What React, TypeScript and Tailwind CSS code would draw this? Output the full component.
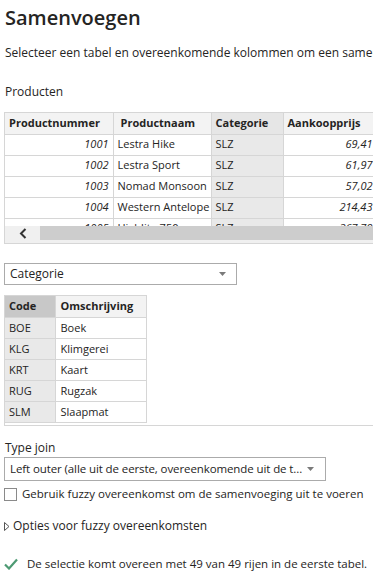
import React from 'react';

const font = { fontFamily: '"Open Sans", "Noto Sans", sans-serif' };

const products = [
    { nr: '1001', naam: 'Lestra Hike', cat: 'SLZ', prijs: '69,41' },
    { nr: '1002', naam: 'Lestra Sport', cat: 'SLZ', prijs: '61,97' },
    { nr: '1003', naam: 'Nomad Monsoon', cat: 'SLZ', prijs: '57,02' },
    { nr: '1004', naam: 'Western Antelope', cat: 'SLZ', prijs: '214,43' },
    { nr: '1005', naam: 'Highlite 750', cat: 'SLZ', prijs: '267,79' },
];

const categories = [
    { code: 'BOE', oms: 'Boek' },
    { code: 'KLG', oms: 'Klimgerei' },
    { code: 'KRT', oms: 'Kaart' },
    { code: 'RUG', oms: 'Rugzak' },
    { code: 'SLM', oms: 'Slaapmat' },
];

const Caret = () => (
    <svg width="7" height="4" viewBox="0 0 7 4" className="shrink-0">
        <path d="M0 0h7L3.5 4z" fill="#7a7a7a" />
    </svg>
);

const App = () => {
    return (
        <div className="w-[373px] h-[585px] overflow-hidden bg-white text-[#252423] pl-[4px]" style={font}>
            <h1 className="text-[20px] font-semibold leading-[28px] pt-[4px] pl-[1px] whitespace-nowrap">Samenvoegen</h1>

            <p className="text-[12px] leading-[18px] mt-[12px] pl-[1px] whitespace-nowrap">
                Selecteer een tabel en overeenkomende kolommen om een samengevoegde tabel te maken.
            </p>

            <p className="text-[12px] leading-[18px] mt-[21px] pl-[1px]">Producten</p>

            {/* producten preview */}
            <div className="mt-[11px] h-[132px] border border-[#d6d6d6] border-r-0 flex flex-col overflow-hidden">
                <div className="h-[113px] overflow-hidden">
                    <table className="border-collapse text-[11px] whitespace-nowrap table-fixed w-[400px]">
                        <colgroup>
                            <col className="w-[108px]" />
                            <col className="w-[98px]" />
                            <col className="w-[72px]" />
                            <col className="w-[122px]" />
                        </colgroup>
                        <thead>
                            <tr className="h-[21px] bg-[#f3f3f3] font-semibold">
                                <th className="text-left px-[4px] border-r border-b border-[#d6d6d6]">Productnummer</th>
                                <th className="text-left px-[7px] border-r border-b border-[#d6d6d6]">Productnaam</th>
                                <th className="text-left px-[4px] border-r border-b border-[#d6d6d6] bg-[#e6e6e6]">Categorie</th>
                                <th className="text-left px-[4px] border-b border-[#d6d6d6]">Aankoopprijs</th>
                            </tr>
                        </thead>
                        <tbody>
                            {products.map((p) => (
                                <tr key={p.nr} className="h-[21px]">
                                    <td className="text-right italic px-[4px] border-r border-b border-[#d6d6d6]">{p.nr}</td>
                                    <td className="px-[4px] border-r border-b border-[#d6d6d6] overflow-hidden">{p.naam}</td>
                                    <td className="px-[4px] border-r border-b border-[#d6d6d6] bg-[#e9e9e9]">{p.cat}</td>
                                    <td className="italic border-b border-[#d6d6d6]">
                                        <div className="w-[89px] text-right">{p.prijs}</div>
                                    </td>
                                </tr>
                            ))}
                        </tbody>
                    </table>
                </div>
                <div className="h-[17px] flex items-stretch bg-[#f0f0f0] pb-[3px]">
                    <div className="w-[35px] flex items-center justify-center">
                        <svg width="8" height="11" viewBox="0 0 8 11">
                            <path d="M6.5 1L2 5.5 6.5 10" stroke="#333" strokeWidth="2" fill="none" />
                        </svg>
                    </div>
                    <div className="flex-1 bg-[#cdcdcd]" />
                </div>
            </div>

            {/* kolom selectie */}
            <div className="mt-[19px] w-[233px] h-[22px] border border-[#ababab] flex items-center justify-between px-[5px] pr-[10px]">
                <span className="text-[12px]">Categorie</span>
                <Caret />
            </div>

            {/* categorie preview */}
            <div className="mt-[10px] h-[131px] border border-[#d6d6d6] border-r-0 border-t-0">
                <table className="border-collapse text-[11px] whitespace-nowrap table-fixed w-[141px]">
                    <colgroup>
                        <col className="w-[50px]" />
                        <col className="w-[91px]" />
                    </colgroup>
                    <thead>
                        <tr className="h-[22px] font-semibold">
                            <th className="text-left px-[4px] border-t border-r border-b border-[#d6d6d6] bg-[#c8c8c8]">Code</th>
                            <th className="text-left px-[5px] border border-l-0 border-[#d6d6d6] bg-[#f3f3f3]">Omschrijving</th>
                        </tr>
                    </thead>
                    <tbody>
                        {categories.map((c) => (
                            <tr key={c.code} className="h-[21px]">
                                <td className="px-[4px] border-r border-b border-[#d6d6d6] bg-[#e9e9e9]">{c.code}</td>
                                <td className="px-[5px] border-r border-b border-[#d6d6d6]">{c.oms}</td>
                            </tr>
                        ))}
                    </tbody>
                </table>
            </div>

            <p className="text-[12px] leading-[18px] mt-[13px] pl-[1px]">Type join</p>
            <div className="mt-[0px] w-[322px] h-[24px] border border-[#ababab] flex items-center justify-between px-[5px] pr-[11px]">
                <span className="text-[11.5px] tracking-[-0.1px] whitespace-nowrap">Left outer (alle uit de eerste, overeenkomende uit de t...</span>
                <Caret />
            </div>

            <label className="mt-[4px] flex items-center gap-[5px] text-[11.5px] leading-[18px] whitespace-nowrap">
                <span className="w-[13px] h-[13px] border border-[#8a8a8a] bg-white shrink-0" />
                <span>Gebruik fuzzy overeenkomst om de samenvoeging uit te voeren</span>
            </label>

            <div className="mt-[14px] flex items-center gap-[3px] text-[12px] leading-[18px] whitespace-nowrap">
                <svg width="6" height="9" viewBox="0 0 6 9" className="shrink-0">
                    <path d="M0.5 0.5L5 4.5 0.5 8.5z" stroke="#555" strokeWidth="1" fill="none" />
                </svg>
                <span>Opties voor fuzzy overeenkomsten</span>
            </div>

            <div className="mt-[20px] flex items-center gap-[9px] text-[11.5px] leading-[18px] whitespace-nowrap">
                <svg width="14" height="12" viewBox="0 0 14 12" className="shrink-0">
                    <path d="M1 6.5L5 10.5 13 1.5" stroke="#4d9a73" strokeWidth="2.2" fill="none" />
                </svg>
                <span>De selectie komt overeen met 49 van 49 rijen in de eerste tabel.</span>
            </div>
        </div>
    );
};

export default App;
